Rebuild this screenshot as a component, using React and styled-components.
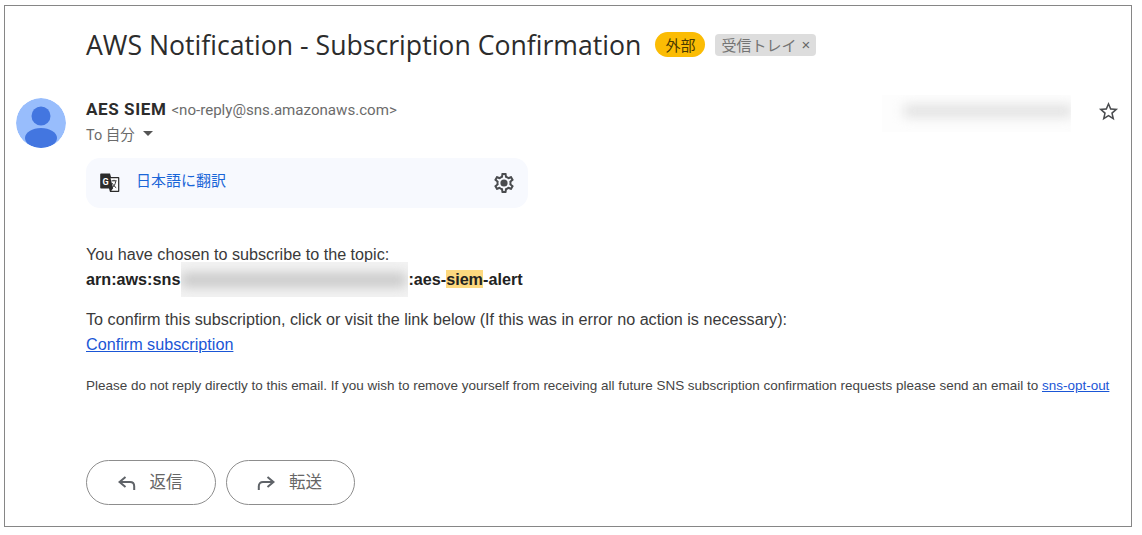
import React from 'react';
import styled, { createGlobalStyle } from 'styled-components';

const GlobalStyle = createGlobalStyle`
    html, body {
        margin: 0;
        padding: 0;
        background: #fff;
    }
`;

function Avatar() {
    return (
        <AvatarCircle>
            <svg width="50" height="50" viewBox="0 0 50 50">
                <circle cx="25" cy="25" r="25" fill="#98bdfc" />
                <circle cx="25" cy="18" r="9.5" fill="#4376e0" />
                <ellipse cx="25" cy="40" rx="16" ry="10" fill="#4376e0" />
            </svg>
        </AvatarCircle>
    );
}

function TranslateIcon() {
    return (
        <svg width="22" height="22" viewBox="0 0 22 22">
            <path d="M2 1.5h9l1 3.5h7.5c.5 0 .8.3.8.8v13.4c0 .5-.3.8-.8.8H11l-1-3.5H2c-.5 0-.8-.3-.8-.8V2.3c0-.5.3-.8.8-.8z" fill="#2b2b2b" />
            <path d="M11.5 6.3h7.6v12.4h-6.9l2-2.5z" fill="#fff" />
            <text x="3.4" y="12.6" fontSize="9" fontWeight="700" fill="#fff" fontFamily="Roboto, sans-serif">G</text>
            <path d="M12.6 8.8h5M15 7.8v1M13 15.6c2-1 3.3-3.2 3.7-6.4M13.4 11.2c.8 1.8 2 3.4 3.8 4.6" stroke="#333" strokeWidth="1" fill="none" />
        </svg>
    );
}

function GearIcon() {
    return (
        <svg width="24" height="24" viewBox="0 0 24 24" fill="#4a4c4f">
            <path d="M19.43 12.98c.04-.32.07-.64.07-.98 0-.34-.03-.66-.07-.98l2.11-1.65c.19-.15.24-.42.12-.64l-2-3.46c-.09-.16-.26-.25-.44-.25-.06 0-.12.01-.17.03l-2.49 1c-.52-.4-1.08-.73-1.69-.98l-.38-2.65C14.46 2.18 14.25 2 14 2h-4c-.25 0-.46.18-.49.42l-.38 2.65c-.61.25-1.17.59-1.69.98l-2.49-1c-.06-.02-.12-.03-.18-.03-.17 0-.34.09-.43.25l-2 3.46c-.13.22-.07.49.12.64l2.11 1.65c-.04.32-.07.65-.07.98 0 .33.03.66.07.98l-2.11 1.65c-.19.15-.24.42-.12.64l2 3.46c.09.16.26.25.44.25.06 0 .12-.01.17-.03l2.49-1c.52.4 1.08.73 1.69.98l.38 2.65c.03.24.24.42.49.42h4c.25 0 .46-.18.49-.42l.38-2.65c.61-.25 1.17-.59 1.69-.98l2.49 1c.06.02.12.03.18.03.17 0 .34-.09.43-.25l2-3.46c.12-.22.07-.49-.12-.64l-2.11-1.65zm-1.98-1.71c.04.31.05.52.05.73 0 .21-.02.43-.05.73l-.14 1.13.89.7 1.08.84-.7 1.21-1.27-.51-1.04-.42-.9.68c-.43.32-.84.56-1.25.73l-1.06.43-.16 1.13-.2 1.35h-1.4l-.19-1.35-.16-1.13-1.06-.43c-.43-.18-.83-.41-1.23-.71l-.91-.7-1.06.43-1.27.51-.7-1.21 1.08-.84.89-.7-.14-1.13c-.03-.31-.05-.54-.05-.74s.02-.43.05-.73l.14-1.13-.89-.7-1.08-.84.7-1.21 1.27.51 1.04.42.9-.68c.43-.32.84-.56 1.25-.73l1.06-.43.16-1.13.2-1.35h1.39l.19 1.35.16 1.13 1.06.43c.43.18.83.41 1.23.71l.91.7 1.06-.43 1.27-.51.7 1.21-1.07.85-.89.7.14 1.13z" />
            <circle cx="12" cy="12" r="3.6" />
        </svg>
    );
}

function StarIcon() {
    return (
        <svg width="23" height="23" viewBox="0 0 24 24" fill="#4a4c4f">
            <path d="M22 9.24l-7.19-.62L12 2 9.19 8.63 2 9.24l5.46 4.73L5.82 21 12 17.27 18.18 21l-1.63-7.03L22 9.24zM12 15.4l-3.76 2.27 1-4.28-3.32-2.88 4.38-.38L12 6.1l1.71 4.04 4.38.38-3.32 2.88 1 4.28L12 15.4z" />
        </svg>
    );
}

function ReplyIcon() {
    return (
        <svg width="18" height="14" viewBox="0 0 18 14" fill="none" stroke="#5f6368" strokeWidth="2">
            <path d="M7.5 1L1.5 6l6 5" />
            <path d="M2 6h10c2.6 0 4.2 1.6 4.2 4.2V14" />
        </svg>
    );
}

function ForwardIcon() {
    return (
        <svg width="18" height="14" viewBox="0 0 18 14" fill="none" stroke="#5f6368" strokeWidth="2">
            <path d="M10.5 1l6 5-6 5" />
            <path d="M16 6H6C3.4 6 1.8 7.6 1.8 10.2V14" />
        </svg>
    );
}

function App() {
    return (
        <Frame>
            <GlobalStyle />
            <SubjectRow>
                <Subject>AWS Notification - Subscription Confirmation</Subject>
                <ExternalBadge>外部</ExternalBadge>
                <InboxBadge>受信トレイ<BadgeClose>×</BadgeClose></InboxBadge>
            </SubjectRow>

            <MessageHead>
                <Avatar />
                <HeadMain>
                    <SenderRow>
                        <SenderName>AES SIEM</SenderName>
                        <SenderMail>&lt;no-reply@sns.amazonaws.com&gt;</SenderMail>
                    </SenderRow>
                    <ToRow>To 自分<Caret /></ToRow>
                </HeadMain>
                <DateBlur><DateSmear /></DateBlur>
                <StarSlot><StarIcon /></StarSlot>
            </MessageHead>

            <TranslateBar>
                <TranslateLeft>
                    <TranslateIcon />
                    <TranslateLink>日本語に翻訳</TranslateLink>
                </TranslateLeft>
                <GearIcon />
            </TranslateBar>

            <Body>
                <Line>You have chosen to subscribe to the topic:</Line>
                <Line bold>
                    arn:aws:sns<ArnBlur><ArnSmear /></ArnBlur>:aes-<Highlight>siem</Highlight>-alert
                </Line>
                <Spacer />
                <Line>To confirm this subscription, click or visit the link below (If this was in error no action is necessary):</Line>
                <Line><BodyLink>Confirm subscription</BodyLink></Line>
                <Notice>
                    Please do not reply directly to this email. If you wish to remove yourself from receiving all future SNS subscription confirmation requests please send an email to <BodyLink>sns-opt-out</BodyLink>
                </Notice>
            </Body>

            <Actions>
                <ActionButton $width={130}><ReplyIcon /><ActionLabel>返信</ActionLabel></ActionButton>
                <ActionButton $width={129}><ForwardIcon /><ActionLabel>転送</ActionLabel></ActionButton>
            </Actions>
        </Frame>
    );
}

export default App;

const Frame = styled.div`
    box-sizing: border-box;
    width: 1128px;
    height: 522px;
    margin: 5px 0 0 4px;
    border: 1px solid #868686;
    padding-top: 18px;
    background: #fff;
    color: #333;
    overflow: hidden;
`;

const SubjectRow = styled.div`
    display: flex;
    align-items: center;
    height: 41px;
    padding-left: 81px;
`;

const Subject = styled.div`
    font-family: "Open Sans", sans-serif;
    font-size: 26.65px;
    color: #2c2c2c;
    white-space: nowrap;
`;

const ExternalBadge = styled.div`
    margin-left: 14px;
    width: 50px;
    height: 25px;
    line-height: 25px;
    text-align: center;
    border-radius: 13px;
    background: #fbbc04;
    color: #4a3a00;
    font-family: "Noto Sans CJK JP", sans-serif;
    font-size: 15px;
`;

const InboxBadge = styled.div`
    display: flex;
    align-items: center;
    margin-left: 10px;
    height: 22px;
    padding: 0 6px;
    border-radius: 4px;
    background: #dddddd;
    color: #747474;
    font-family: "Noto Sans CJK JP", sans-serif;
    font-size: 15px;
    white-space: nowrap;
`;

const BadgeClose = styled.span`
    margin-left: 5px;
    font-family: "Liberation Sans", sans-serif;
    font-size: 15px;
    color: #666;
`;

const MessageHead = styled.div`
    display: flex;
    align-items: flex-start;
    margin-top: 33px;
    padding: 0 11px;
`;

const AvatarCircle = styled.div`
    flex: none;
    width: 50px;
    height: 50px;
    border-radius: 50%;
    overflow: hidden;
`;

const HeadMain = styled.div`
    flex: 1;
    margin-left: 20px;
`;

const SenderRow = styled.div`
    display: flex;
    align-items: baseline;
    height: 24px;
    line-height: 23px;
`;

const SenderName = styled.span`
    font-family: Roboto, sans-serif;
    font-weight: 700;
    font-size: 17px;
    letter-spacing: 0.6px;
    color: #2c2c2c;
`;

const SenderMail = styled.span`
    margin-left: 5px;
    font-family: Roboto, sans-serif;
    font-size: 15.1px;
    color: #6b6b6b;
`;

const ToRow = styled.div`
    display: flex;
    align-items: center;
    height: 22px;
    font-family: Roboto, "Noto Sans CJK JP", sans-serif;
    font-size: 14.5px;
    color: #6b6b6b;
`;

const Caret = styled.span`
    width: 0;
    height: 0;
    margin-left: 8px;
    border-left: 5px solid transparent;
    border-right: 5px solid transparent;
    border-top: 5px solid #555;
`;

const DateBlur = styled.div`
    flex: none;
    width: 189px;
    height: 37px;
    margin-top: -3px;
    overflow: hidden;
    background: #fdfdfd;
`;

const DateSmear = styled.div`
    width: 168px;
    height: 12px;
    margin: 10px 0 0 22px;
    background: #e0e0e0;
    filter: blur(6px);
`;

const StarSlot = styled.div`
    flex: none;
    width: 23px;
    margin: 2px 0 0 26px;
`;

const TranslateBar = styled.div`
    display: flex;
    align-items: center;
    justify-content: space-between;
    box-sizing: border-box;
    width: 442px;
    height: 50px;
    margin: 10px 0 0 81px;
    padding: 0 12px 0 13px;
    border-radius: 14px;
    background: #f7f9fe;
`;

const TranslateLeft = styled.div`
    display: flex;
    align-items: center;
    gap: 15px;
`;

const TranslateLink = styled.span`
    margin-bottom: 7px;
    font-family: "Noto Sans CJK JP", sans-serif;
    font-size: 15px;
    color: #1a66d8;
`;

const Body = styled.div`
    margin-top: 34px;
    padding-left: 81px;
    font-family: "Liberation Sans", Arial, sans-serif;
    font-size: 16.18px;
    color: #333;
`;

const Line = styled.div`
    height: 25px;
    line-height: 25px;
    white-space: nowrap;
    font-weight: ${(props) => (props.bold ? 700 : 400)};
    color: ${(props) => (props.bold ? '#222' : '#3a3a3a')};
`;

const Spacer = styled.div`
    height: 15px;
`;

const ArnBlur = styled.span`
    display: inline-block;
    vertical-align: top;
    width: 227px;
    height: 35px;
    margin: -5px 0 -5px 1px;
    overflow: hidden;
    background: #f3f3f3;
`;

const ArnSmear = styled.span`
    display: block;
    width: 225px;
    height: 14px;
    margin-top: 11px;
    background: #c8c8c8;
    filter: blur(6px);
`;

const Highlight = styled.span`
    background: #fdd97f;
`;

const BodyLink = styled.a`
    color: #1a56d6;
    text-decoration: underline;
`;

const Notice = styled.div`
    margin-top: 20px;
    font-size: 13.47px;
    line-height: 18px;
    color: #444;
    white-space: nowrap;
`;

const Actions = styled.div`
    display: flex;
    gap: 10px;
    margin-top: 65px;
    padding-left: 81px;
`;

const ActionButton = styled.div`
    display: flex;
    align-items: center;
    justify-content: center;
    gap: 14px;
    box-sizing: border-box;
    width: ${(props) => props.$width}px;
    height: 45px;
    padding-right: 2px;
    border: 1px solid #8d8d8d;
    border-radius: 23px;
    font-family: "Noto Sans CJK JP", sans-serif;
    font-size: 16.5px;
    color: #666;
`;

const ActionLabel = styled.span`
    margin-bottom: 3px;
`;
